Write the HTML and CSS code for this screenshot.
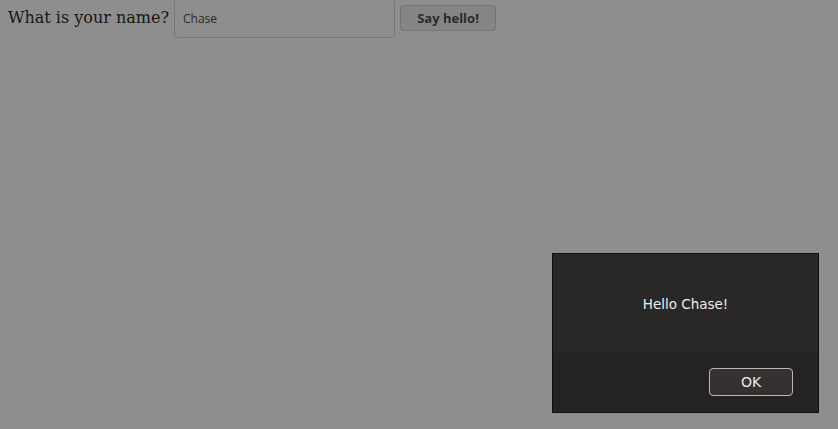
FILE: index.html
```html
<!DOCTYPE html>
<html>
<head>
<meta charset="utf-8">
<link rel="stylesheet" href="styles.css">
</head>
<body>
<div class="row">
  <label class="label" for="name">What is your name?</label>
  <input id="name" class="name" type="text" value="Chase">
  <button class="say">Say hello!</button>
</div>
<div class="dialog">
  <div class="dialog-body">Hello Chase!</div>
  <div class="dialog-actions"><button class="ok">OK</button></div>
</div>
</body>
</html>
```
FILE: styles.css
```css
html, body {
  margin: 0;
  height: 100%;
  background: #8e8e8e;
  overflow: hidden;
}
.row {
  display: flex;
  align-items: center;
  padding: 0 8px;
  margin-top: -2px;
  height: 40px;
}
.label {
  font-family: "DejaVu Serif", serif;
  font-size: 16px;
  color: #161616;
  margin-right: 5px;
  position: relative;
  top: -1px;
}
.name {
  box-sizing: border-box;
  width: 221px;
  height: 40px;
  margin: 0;
  padding: 0 8px;
  border: 1px solid #777;
  border-radius: 4px;
  background: #8e8e8e;
  font-family: "Open Sans", "DejaVu Sans", sans-serif;
  font-size: 12px;
  color: #2a2a2a;
  outline: none;
}
.say {
  box-sizing: border-box;
  margin-left: 5px;
  width: 96px;
  height: 26px;
  border: 1px solid #767676;
  border-radius: 3px;
  background: #858585;
  font-family: "Open Sans", "DejaVu Sans", sans-serif;
  font-weight: 700;
  font-size: 13px;
  color: #2b2b2b;
  padding: 0;
}
.dialog {
  position: absolute;
  left: 552px;
  top: 253px;
  width: 267px;
  height: 160px;
  box-sizing: border-box;
  border: 1px solid #0e0e0e;
  background: #242322;
  display: flex;
  flex-direction: column;
}
.dialog-body {
  height: 99px;
  background: #292827;
  color: #ececec;
  font-family: "DejaVu Sans", sans-serif;
  font-size: 13.5px;
  display: flex;
  align-items: center;
  justify-content: center;
  padding-top: 1px;
  box-sizing: border-box;
}
.dialog-actions {
  flex: 1;
  display: flex;
  justify-content: flex-end;
  align-items: flex-start;
  padding: 15px 25px 0 0;
}
.ok {
  box-sizing: border-box;
  width: 84px;
  height: 28px;
  border: 1px solid #b8b6b4;
  border-radius: 4px;
  background: #353130;
  color: #ececec;
  font-family: "DejaVu Sans", sans-serif;
  font-size: 14px;
  padding: 0;
}
```
